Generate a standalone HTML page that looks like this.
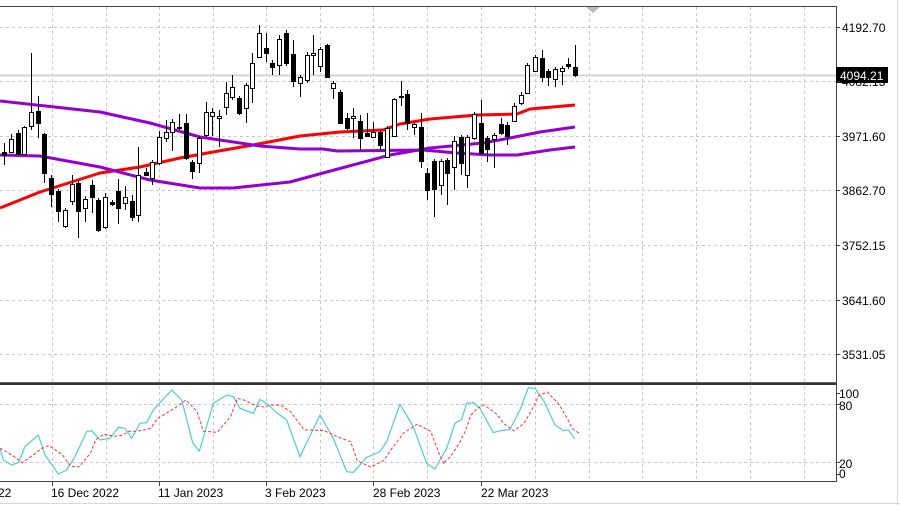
<!DOCTYPE html>
<html><head><meta charset="utf-8"><style>
html,body{margin:0;padding:0;background:#fff;width:900px;height:505px;overflow:hidden}
svg text{font-family:"Liberation Sans",sans-serif;font-size:12px;fill:#000}
</style></head><body>
<svg id="s" width="900" height="505" xmlns="http://www.w3.org/2000/svg" shape-rendering="crispEdges">
<rect width="900" height="505" fill="#fff"/>
<line x1="897.5" y1="0" x2="897.5" y2="505" stroke="#d8d8d8"/>
<line x1="0" y1="503.5" x2="900" y2="503.5" stroke="#d8d8d8"/>
<g id="grid" stroke="#c8c8c8" stroke-dasharray="3,3"></g>
<line x1="0" y1="75.5" x2="836" y2="75.5" stroke="#d4d4d4" stroke-width="2"/>
<line x1="0" y1="6.5" x2="836" y2="6.5" stroke="#444"/>
<line x1="836.5" y1="6" x2="836.5" y2="482" stroke="#444"/>
<line x1="0" y1="382.5" x2="836" y2="382.5" stroke="#666"/>
<line x1="0" y1="384" x2="836" y2="384" stroke="#333" stroke-width="2"/>
<line x1="0" y1="481.5" x2="836" y2="481.5" stroke="#444"/>
<polygon points="586,7 600,7 593,13" fill="#bbb"/>
<g id="ma" fill="none" stroke-width="3" stroke-linejoin="round" shape-rendering="auto">
<polyline stroke="#ff0000" points="0,208 40,192 100,173 140,167 180,158 213,152 253,145 300,136 340,132 383,130 400,124 430,119 477,115 517,114 530,109 575,105"/>
<polyline stroke="#9400d3" points="0,101 100,112 150,123 200,137 260,146 300,149 323,149 337,151 423,150 457,153 490,155 517,155 550,150 575,147"/>
<polyline stroke="#9400d3" points="0,155 40,156 100,167 150,180 200,188 233,188 290,182 323,173 390,155 430,148 483,143 510,138 540,132 575,127"/>
</g>
<g id="candles"></g>
<g id="sto" fill="none" shape-rendering="auto"></g>
<g>
<text x="842" y="32">4192.70</text>
<text x="842" y="86">4082.15</text>
<text x="842" y="141">3971.60</text>
<text x="842" y="195">3862.70</text>
<text x="842" y="250">3752.15</text>
<text x="842" y="305">3641.60</text>
<text x="842" y="359">3531.05</text>
<rect x="836" y="67" width="52" height="16" fill="#000"/>
<text x="840" y="80" style="fill:#fff">4094.21</text>
<text x="839" y="398">100</text>
<text x="839" y="410">80</text>
<text x="839" y="468">20</text>
<text x="839" y="478">0</text>
<text x="-2" y="497">22</text>
<text x="51" y="497">16 Dec 2022</text>
<text x="158" y="497">11 Jan 2023</text>
<text x="265" y="497">3 Feb 2023</text>
<text x="373" y="497">28 Feb 2023</text>
<text x="481" y="497">22 Mar 2023</text>
</g>
<g stroke="#444" id="ticks"></g>
</svg>
<script>
var NS="http://www.w3.org/2000/svg";
function el(p,t,a){var e=document.createElementNS(NS,t);for(var k in a)e.setAttribute(k,a[k]);p.appendChild(e);return e;}
var g=document.getElementById('grid');
var vx=[52,106,159,213,266,320,373,427,481,535,589,642,696,750,804];
vx.forEach(function(x){el(g,'line',{x1:x+.5,y1:7,x2:x+.5,y2:382});el(g,'line',{x1:x+.5,y1:386,x2:x+.5,y2:481});});
[27,81,136,190,245,300,354].forEach(function(y){el(g,'line',{x1:0,y1:y+.5,x2:836,y2:y+.5});});
[404,462].forEach(function(y){el(g,'line',{x1:0,y1:y+.5,x2:836,y2:y+.5});});
var t=document.getElementById('ticks');
[52,159,266,373,481].forEach(function(x){el(t,'line',{x1:x+.5,y1:482,x2:x+.5,y2:486});});
[27,81,136,190,245,300,354,393,404,462,474].forEach(function(y){el(t,'line',{x1:837,y1:y+.5,x2:840,y2:y+.5});});
var C=[[4,143,165,152,155,1],[11,134,153,139,152,0],[18,130,155,133,154,1],[24,126,155,127,154,0],[31,53,130,112,126,0],[38,96,138,111,123,1],[44,133,183,134,173,1],[51,175,207,178,194,1],[58,189,222,191,211,1],[65,208,228,210,226,0],[72,175,205,184,201,0],[78,180,238,183,211,1],[85,196,222,199,208,0],[92,180,213,185,197,1],[98,198,232,200,230,1],[105,193,229,197,227,0],[112,200,206,202,204,1],[118,179,224,191,208,1],[125,186,210,197,203,0],[132,195,221,201,217,1],[138,147,222,175,215,0],[146,168,176,172,175,1],[152,160,185,162,178,0],[159,131,165,137,163,0],[166,120,142,132,138,0],[172,119,151,122,132,0],[179,114,130,127,128,1],[186,114,160,123,158,1],[192,160,179,162,171,1],[199,136,173,138,163,0],[206,102,137,112,135,0],[212,108,136,112,116,0],[219,110,147,116,118,0],[226,82,115,93,107,0],[232,75,100,87,97,0],[239,96,115,98,113,1],[246,83,123,85,108,0],[252,53,103,63,88,0],[259,25,57,33,57,0],[266,33,62,48,53,1],[272,60,75,63,67,1],[279,35,75,39,65,0],[286,30,66,33,63,1],[293,40,87,54,81,1],[300,75,97,77,83,0],[307,52,83,55,80,0],[313,35,75,53,55,0],[320,47,72,49,66,0],[327,44,78,45,77,1],[333,81,99,83,88,0],[340,90,124,92,123,1],[347,113,130,118,128,1],[353,108,138,116,118,0],[360,115,150,121,138,1],[367,113,137,133,136,1],[373,122,138,132,137,0],[380,130,150,132,145,1],[387,126,158,128,157,0],[394,98,137,99,136,0],[401,81,106,96,97,1],[407,90,130,94,123,1],[414,122,135,124,127,0],[421,113,168,127,161,1],[427,168,200,173,190,1],[434,159,217,161,189,1],[441,159,195,161,185,0],[447,158,205,160,173,1],[454,136,190,141,167,0],[461,135,175,137,163,1],[467,135,188,137,175,0],[474,112,140,114,138,0],[481,100,153,123,153,1],[487,136,162,138,149,1],[494,133,168,135,139,0],[501,118,135,124,133,1],[507,122,145,125,136,1],[514,103,121,106,121,0],[521,92,105,95,103,0],[527,63,94,65,93,0],[535,55,72,57,71,0],[542,50,82,58,77,1],[548,69,86,71,77,1],[555,67,87,69,79,0],[562,66,85,68,71,0],[568,58,69,64,66,1],[575,45,77,67,75,1]];
var cg=document.getElementById('candles');
C.forEach(function(c){var x=c[0];el(cg,'line',{x1:x+.5,y1:c[1],x2:x+.5,y2:c[2],stroke:'#000'});
var h=Math.max(1,c[4]-c[3]);el(cg,'rect',{x:x-2+.5,y:c[3]+.5,width:4,height:h,fill:c[5]?'#000':'#fff',stroke:'#000'});});
var cy=[[0,235],[10,270],[35,285],[55,278],[75,230],[115,195],[135,255],[175,312],[200,300],[225,260],[260,185],[275,182],[300,210],[330,205],[355,172],[375,175],[395,205],[420,160],[440,158],[460,120],[515,60],[545,90],[578,218],[598,243],[640,100],[680,75],[700,80],[720,115],[760,130],[780,88],[800,100],[830,128],[860,150],[900,260],[960,135],[1000,205],[1040,305],[1060,307],[1100,262],[1140,245],[1160,215],[1200,103],[1240,170],[1280,280],[1305,297],[1320,270]];
var pts=cy.map(function(p){return [p[0]/3,p[1]/3+370];});
[[0,270],[20,235],[45,160],[65,148],[80,100],[100,98],[120,115],[160,188],[180,182],[210,178],[240,120],[265,53],[285,55],[310,90],[345,165],[370,182],[385,180],[405,207]].forEach(function(p){pts.push([p[0]/3+440,p[1]/3+370]);});
var s=document.getElementById('sto');
el(s,'polyline',{points:pts.map(function(p){return p.join(',')}).join(' '),stroke:'#48d1cc','stroke-width':1.2});
var rp=pts.map(function(p,i){var a=pts[Math.max(0,i-1)],b=pts[Math.max(0,i-2)];return [p[0]+4,(p[1]+a[1]+b[1])/3];});
rp[0][0]=0;
el(s,'polyline',{points:rp.map(function(p){return p[0].toFixed(1)+','+p[1].toFixed(1)}).join(' '),stroke:'#ff3030','stroke-width':1,'stroke-dasharray':'3,2'});
</script>
</body></html>
